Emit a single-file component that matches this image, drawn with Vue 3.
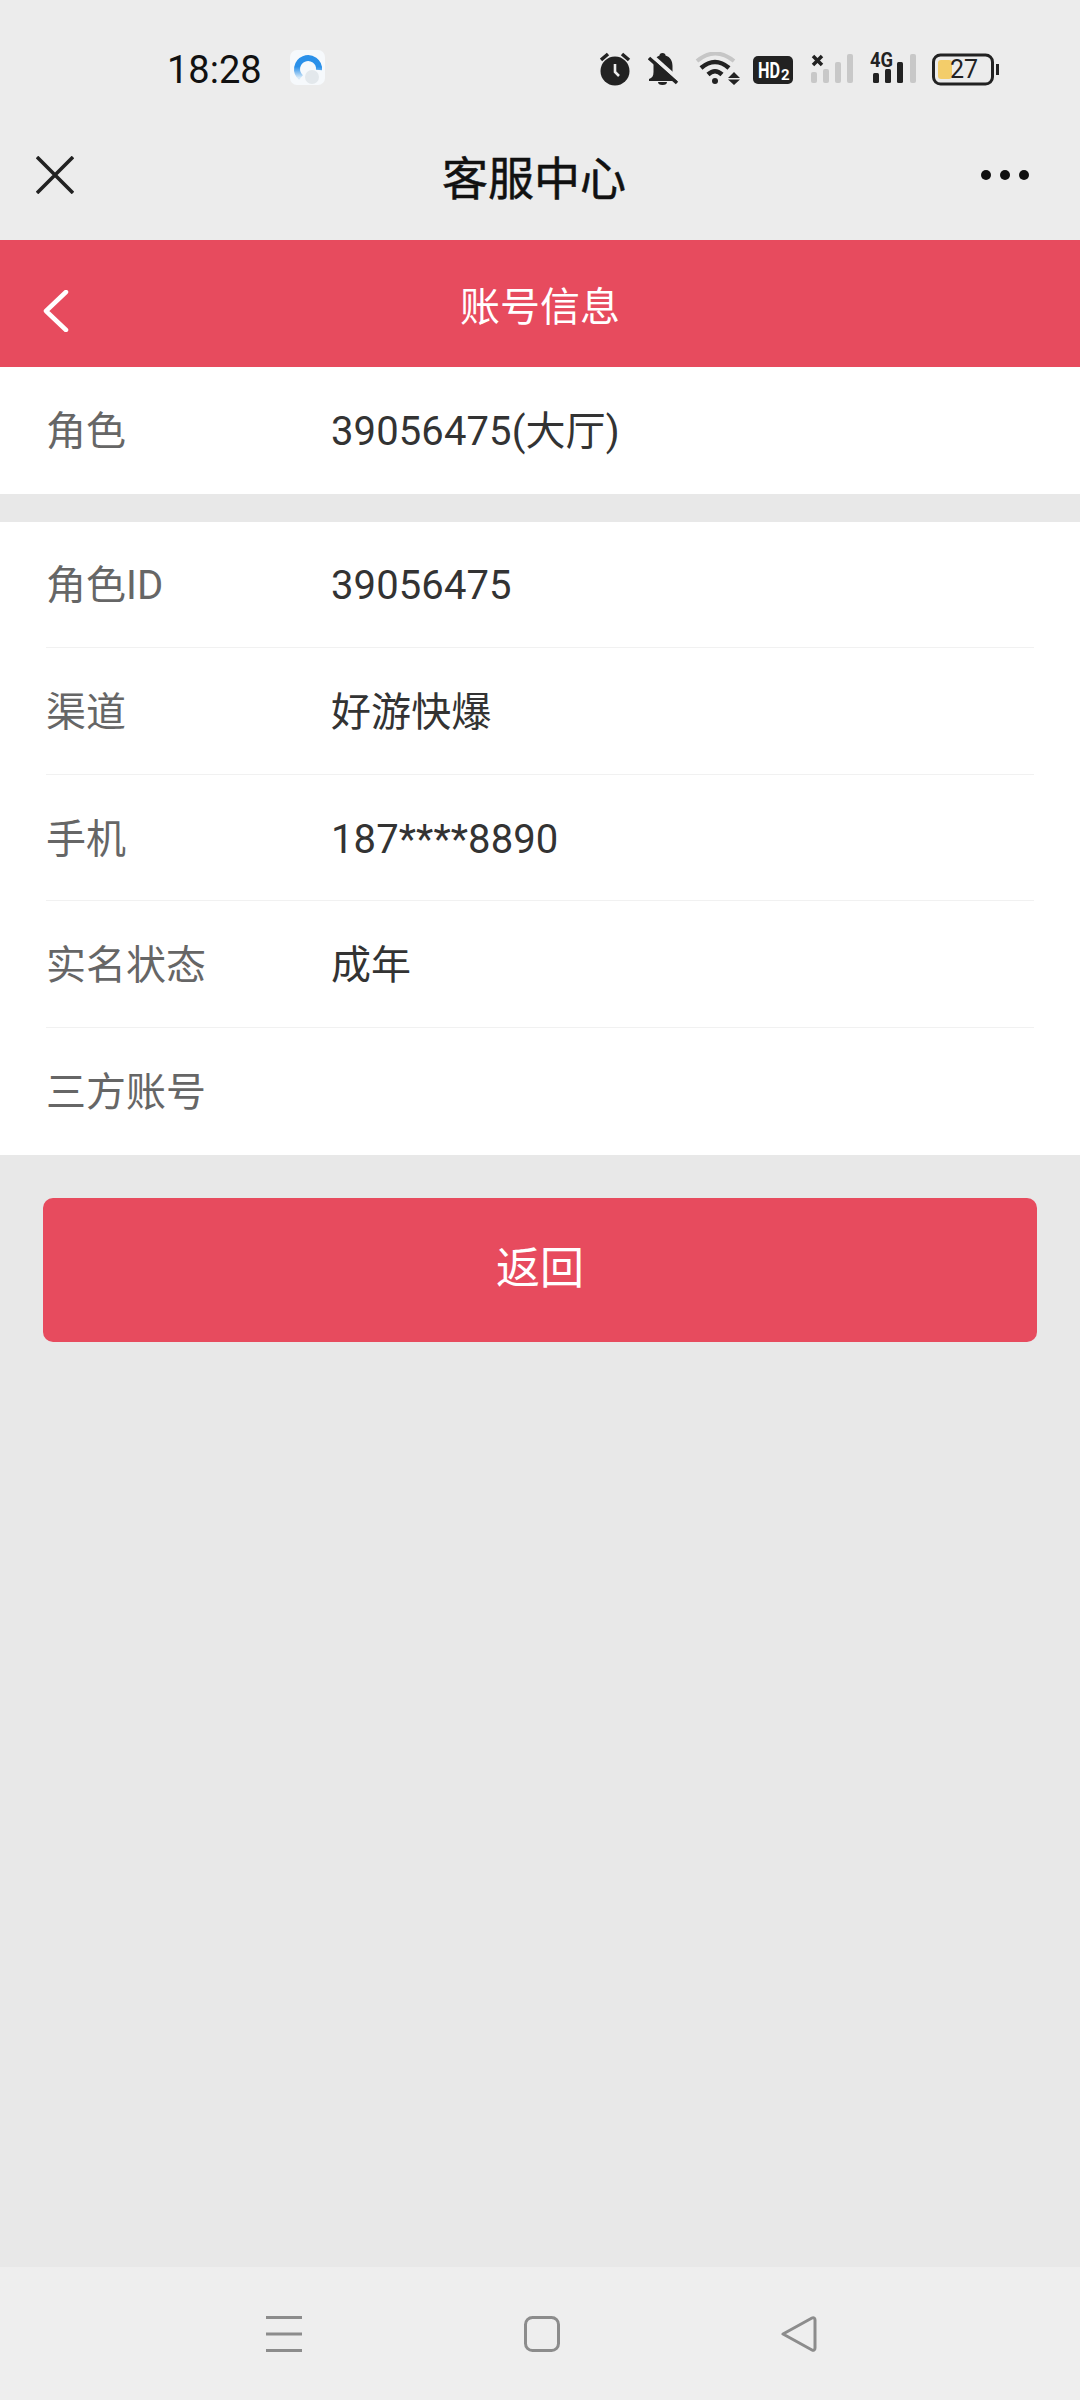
<script setup>
// 账号信息页
const rows = [
  { label: '角色ID', value: '39056475' },
  { label: '渠道', value: '好游快爆' },
  { label: '手机', value: '187****8890' },
  { label: '实名状态', value: '成年' },
  { label: '三方账号', value: '' },
]
</script>

<template>
  <div class="page">
    <div class="status">
      <span class="time">18:28</span>
      <svg class="app-icon" width="35" height="35" viewBox="0 0 35 35">
        <defs>
          <linearGradient id="ring" x1="0" y1="0" x2="0" y2="1">
            <stop offset="0.45" stop-color="#2a90e9" />
            <stop offset="1" stop-color="#d4e8f8" />
          </linearGradient>
        </defs>
        <rect width="35" height="35" rx="7" fill="#f6f9fc" />
        <circle cx="22" cy="27" r="7" fill="#e3e8ec" />
        <path d="M11 27.500A11 11 0 1 1 29 20" fill="none" stroke="url(#ring)" stroke-width="6" />
      </svg>
      <div class="status-right">
        <svg width="35" height="34" viewBox="0 0 35 34">
          <circle cx="15" cy="19" r="14.500" fill="#222" />
          <path d="M1 8 8 2M22 2l7 6" stroke="#222" stroke-width="3.500" fill="none" />
          <path d="M15 12v8l4 4" stroke="#ededed" stroke-width="2.600" fill="none" />
        </svg>
        <svg width="34" height="34" viewBox="0 0 34 34">
          <path d="M14.500 1c2 0 3 1.300 3 2.500C22.500 5 24.500 9 24.500 14v7l4.500 6v2H1v-2c3-1 4.500-3 4.500-7v-6c0-5 2-9 6-10.500C11.500 2.300 12.500 1 14.500 1Z" fill="#222" />
          <path d="M10 30h9a4.500 3 0 0 1-9 0Z" fill="#222" />
          <path d="M3 3 31 28" stroke="#ededed" stroke-width="4" />
          <path d="M1 6 29 31" stroke="#222" stroke-width="3.500" />
        </svg>
        <svg width="45" height="34" viewBox="0 0 45 34">
          <path d="M2 9Q20-6 39 9" stroke="#c6c6c6" stroke-width="4" fill="none" />
          <path d="M6 16Q20 4 34 16" stroke="#222" stroke-width="4.500" fill="none" />
          <path d="M13 22.500Q20 16 27 22.500" stroke="#222" stroke-width="4.500" fill="none" />
          <circle cx="20" cy="29" r="3" fill="#222" />
          <path d="M33 26 39 20l6 6ZM33 27.500h12L39 33Z" fill="#222" />
        </svg>
        <svg width="45" height="34" viewBox="0 0 45 34">
          <rect y="4" width="40" height="28" rx="5" fill="#222" />
          <text x="5" y="26" class="hd" textLength="22" lengthAdjust="spacingAndGlyphs">HD</text>
          <text x="28" y="27.500" class="hd-sub">2</text>
        </svg>
        <svg width="46" height="34" viewBox="0 0 46 34">
          <path d="M2 4 11 13M11 4 2 13" stroke="#222" stroke-width="3.500" />
          <rect y="20" width="6" height="11" rx="2" fill="#c8c8c8" />
          <rect x="12" y="17" width="6" height="14" rx="2" fill="#c8c8c8" />
          <rect x="24" y="10" width="6" height="21" rx="2" fill="#c8c8c8" />
          <rect x="36" y="2" width="6" height="29" rx="2" fill="#c8c8c8" />
        </svg>
        <svg width="49" height="34" viewBox="0 0 49 34">
          <text x="0" y="15" class="net" textLength="23" lengthAdjust="spacingAndGlyphs">4G</text>
          <rect x="3" y="21" width="6" height="10" rx="1.500" fill="#222" />
          <rect x="15" y="17" width="6" height="14" rx="1.500" fill="#222" />
          <rect x="27" y="10" width="6" height="21" rx="1.500" fill="#222" />
          <rect x="40" y="2" width="6" height="29" rx="2" fill="#c8c8c8" />
        </svg>
        <svg width="67" height="34" viewBox="0 0 67 34">
          <rect x="1.500" y="3" width="59" height="29" rx="7" fill="none" stroke="#222" stroke-width="3" />
          <rect x="6" y="8" width="14" height="19" rx="3" fill="#f3cd6a" />
          <text x="18" y="26" class="batt">27</text>
          <rect x="64" y="12" width="3" height="11" fill="#222" />
        </svg>
      </div>
    </div>

    <div class="nav">
      <svg width="38" height="38" viewBox="0 0 38 38">
        <path d="M1 1 37 37M37 1 1 37" stroke="#222" stroke-width="3.600" fill="none" />
      </svg>
      <span class="nav-title">客服中心</span>
      <div class="dots"><i></i><i></i><i></i></div>
    </div>

    <div class="red-bar">
      <svg class="back" width="26" height="42" viewBox="0 0 26 42">
        <path d="M23 2 3 21l20 19" stroke="#fff" stroke-width="4.500" stroke-linecap="round" stroke-linejoin="round" fill="none" />
      </svg>
      <span class="bar-title">账号信息</span>
    </div>

    <div class="card single">
      <div class="row">
        <span class="label">角色</span>
        <span class="value">39056475(大厅)</span>
      </div>
    </div>

    <div class="card list">
      <div v-for="item in rows" :key="item.label" class="row">
        <span class="label">{{ item.label }}</span>
        <span class="value">{{ item.value }}</span>
      </div>
    </div>

    <div class="btn">返回</div>

    <div class="sys-nav">
      <svg width="36" height="36" viewBox="0 0 36 36">
        <path d="M0 1.500h36M0 18h36M0 34.500h36" stroke="#8c8c8c" stroke-width="3" />
      </svg>
      <svg width="36" height="36" viewBox="0 0 36 36">
        <rect x="1.500" y="1.500" width="33" height="33" rx="7" fill="none" stroke="#8c8c8c" stroke-width="3" />
      </svg>
      <svg width="36" height="36" viewBox="0 0 36 36">
        <path d="M2 18 31 2c1.500-.8 3 0 3 2v28c0 2-1.500 2.800-3 2Z" fill="none" stroke="#8c8c8c" stroke-width="3" stroke-linejoin="round" />
      </svg>
    </div>
  </div>
</template>

<style>
html, body {
  margin: 0;
  background: #e8e8e8;
}
</style>

<style scoped>
.page {
  display: flex;
  flex-direction: column;
  width: 1080px;
  height: 2400px;
  overflow: hidden;
  background: #e8e8e8;
  font-family: Roboto, "Noto Sans CJK SC", sans-serif;
}

.status {
  display: flex;
  align-items: flex-start;
  box-sizing: border-box;
  height: 90px;
  padding: 50px 81px 0 167px;
  background: #ececec;
}

.time {
  font-size: 38px;
  line-height: 40px;
  color: #111;
}

.app-icon {
  margin-left: 28px;
}

.status-right {
  display: flex;
  gap: 13px;
  margin-left: auto;
  margin-top: 2px;
}

.hd {
  font: bold 22px Roboto, sans-serif;
  fill: #fff;
}

.hd-sub {
  font: bold 15px Roboto, sans-serif;
  fill: #fff;
}

.net {
  font: bold 20px Roboto, sans-serif;
  fill: #222;
}

.batt {
  font: 400 25px Roboto, sans-serif;
  fill: #222;
}

.nav {
  display: flex;
  align-items: center;
  justify-content: space-between;
  box-sizing: border-box;
  height: 150px;
  padding: 20px 51px 0 36px;
  background: #ececec;
}

.nav-title {
  margin-left: 13px;
  font-size: 46px;
  font-weight: 400;
  -webkit-text-stroke: 0.5px #111;
  color: #111;
}

.dots {
  display: flex;
  gap: 9px;
}

.dots i {
  width: 10px;
  height: 10px;
  border-radius: 50%;
  background: #111;
}

.red-bar {
  position: relative;
  display: flex;
  align-items: center;
  justify-content: center;
  height: 127px;
  background: #e74b5e;
}

.back {
  position: absolute;
  left: 43px;
  top: 50px;
}

.bar-title {
  font-size: 40px;
  color: #fff;
}

.card {
  background: #fff;
}

.single {
  margin-bottom: 28px;
}

.row {
  display: flex;
  align-items: center;
  box-sizing: border-box;
  height: 126.6px;
  margin: 0 46px;
  padding-top: 4px;
  border-bottom: 1px solid #f1f1f1;
  font-size: 40px;
  line-height: 48px;
}

.single .row,
.list .row:last-child {
  border-bottom: 0;
}

.label {
  width: 285px;
  color: #666;
}

.value {
  letter-spacing: 0.1px;
  color: #333;
}

.btn {
  display: flex;
  align-items: center;
  justify-content: center;
  box-sizing: border-box;
  height: 144px;
  margin: 43px 43px 0;
  padding-bottom: 2px;
  border-radius: 10px;
  background: #e74b5e;
  font-size: 44px;
  line-height: 52px;
  color: #fff;
}

.sys-nav {
  display: flex;
  align-items: center;
  justify-content: space-between;
  box-sizing: border-box;
  height: 133px;
  margin-top: auto;
  padding: 0 263px 0 266px;
  background: #eeeeee;
}
</style>
